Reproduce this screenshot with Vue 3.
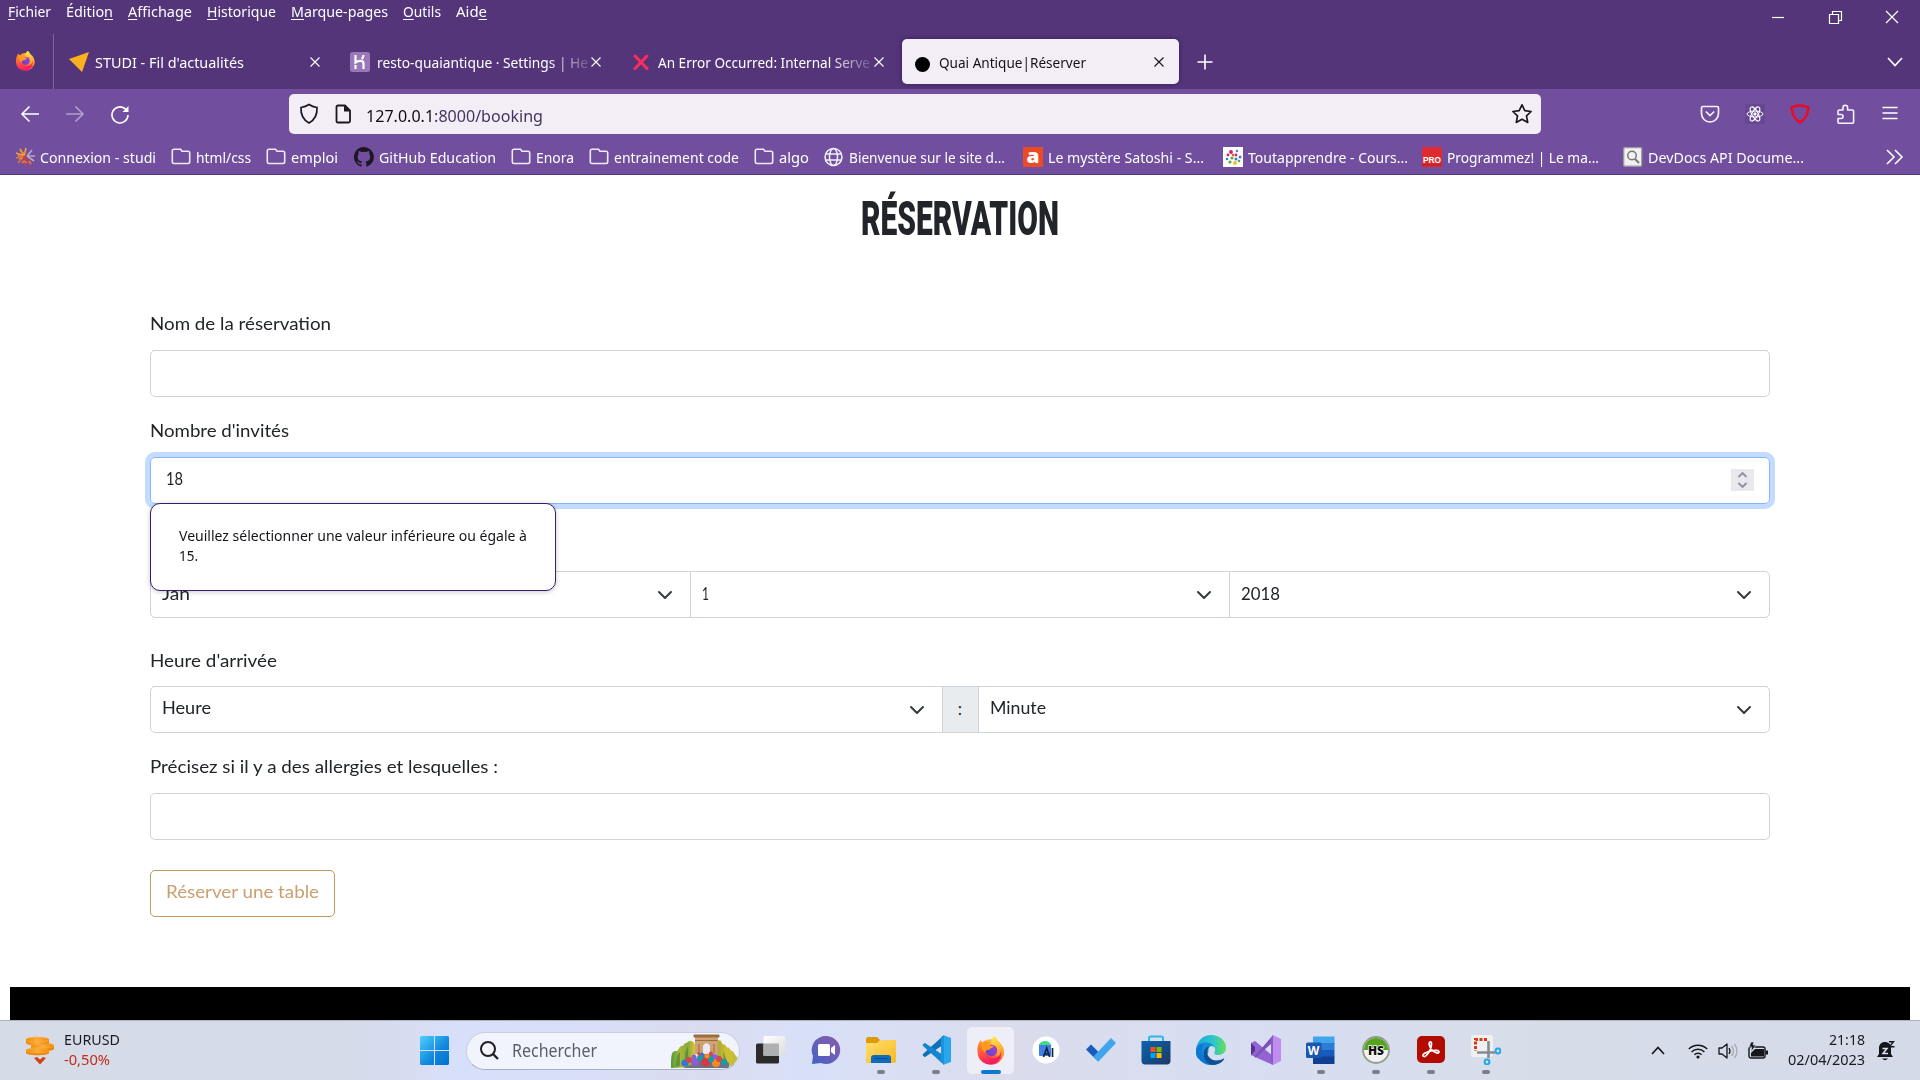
<script setup>
// Sets a text run to an exact width while keeping it in the flow.
const vFit = {
  mounted(el, { value }) {
    const natural = el.getBoundingClientRect().width
    el.style.transform = `scaleX(${value / natural})`
    el.style.marginRight = `${value - natural}px`
  },
}

const menus = [
  { pre: '', key: 'F', post: 'ichier', w: 43 },
  { pre: 'Éditio', key: 'n', post: '', w: 47 },
  { pre: '', key: 'A', post: 'ffichage', w: 64 },
  { pre: '', key: 'H', post: 'istorique', w: 69 },
  { pre: '', key: 'M', post: 'arque-pages', w: 97 },
  { pre: '', key: 'O', post: 'utils', w: 38 },
  { pre: 'Aid', key: 'e', post: '', w: 31 },
]

const firefox = `
  <circle cx="15" cy="17" r="12.8" fill="url(#ffBody)"/>
  <path d="M18 1c4 3 4 6 6 7 4 4 5 9 3 14l-9-3-3-10c0-4 1-6 3-8z" fill="url(#ffTop)"/>
  <path d="M1.500 17C1 11 3 7 5 5l1 3c2-1 4-1 6 0-1 2 0 3 4 4-2 2-4 2-5 4-1 4 2 7 6 7 5 0 8-3 8-8 2 8-4 14-11 14C7 29 2 25 1.500 17z" fill="url(#ffFace)"/>
  <circle cx="15.500" cy="15.500" r="5.700" fill="url(#ffGlobe)"/>
  <path d="M5 8c4-1 6 0 8 2 2 1 4 1 5 1-1 2-4 2-5 4-2-1-4 1-4 3-3-3-4-6-4-10z" fill="#ff9a1f"/>`

const folder = '<path d="M3 16.500h14c1 0 1.700-.7 1.700-1.700V6c0-1-.7-1.700-1.700-1.700h-6L9.500 2.200H3c-1 0-1.700.7-1.700 1.700v11c0 1 .7 1.600 1.700 1.600z" fill="none" stroke="#efe9f6" stroke-width="1.600"/>'

const bookmarks = [
  { label: 'Connexion - studi', w: 116, icon: '<g fill="none" stroke-width="1.700"><path d="M9 9 5 2M9 9 1 6M9 9l2-8" stroke="#f2a23c"/><path d="m9 9-8 2m8-2-6 7" stroke="#d9773c"/><path d="m9 9 1 10M9 9l7 9" stroke="#d23b3b"/><path d="m12 9 5-6m-5 6h8m-8 0 7 5" stroke="#b9a6c4"/></g><path d="m6 5 3 1 2-1M4 12l3-1m0 5 2-2 3 2m-9-8 2 2m9 4 2 3" stroke="#e9803c" fill="none" stroke-width="1.500"/>' },
  { label: 'html/css', w: 55, icon: folder },
  { label: 'emploi', w: 47, icon: folder },
  { label: 'GitHub Education', w: 117, icon: '<path d="M10 0a10 10 0 0 0-3.200 19.500c.5.1.7-.2.700-.5v-1.800c-2.800.6-3.400-1.300-3.400-1.300-.4-1.100-1.100-1.400-1.100-1.400-.9-.6.100-.6.100-.6 1 .1 1.500 1 1.500 1 .9 1.500 2.400 1.100 2.900.8.100-.6.300-1.100.6-1.300-2.200-.3-4.500-1.100-4.500-5 0-1.100.4-2 1-2.700-.1-.2-.4-1.200.1-2.600 0 0 .8-.3 2.700 1a9.500 9.500 0 0 1 5 0c1.900-1.300 2.700-1 2.700-1 .5 1.400.2 2.400.1 2.600.6.700 1 1.600 1 2.700 0 3.900-2.300 4.700-4.600 5 .4.300.7.900.7 1.800V19c0 .3.200.6.700.5A10 10 0 0 0 10 0z" fill="#1b1620"/>' },
  { label: 'Enora', w: 38, icon: folder },
  { label: 'entrainement code', w: 125, icon: folder },
  { label: 'algo', w: 30, icon: folder },
  { label: 'Bienvenue sur le site d...', w: 156, slot: 158.5, icon: '<g fill="none" stroke="#f4f0f8" stroke-width="1.500"><circle cx="9.500" cy="10" r="8.500"/><ellipse cx="9.500" cy="10" rx="4" ry="8.500"/><path d="M1.500 7h16M1.500 13h16"/></g>' },
  { label: 'Le mystère Satoshi - S...', w: 156, slot: 159.5, icon: '<path fill="#ea4b26" d="M0 0h20v20H0z"/><text x="3.500" y="15.500" font-family="Open Sans, sans-serif" font-weight="800" font-size="19" fill="#fff" textLength="13" lengthAdjust="spacingAndGlyphs">a</text>' },
  { label: 'Toutapprendre - Cours...', w: 160, slot: 159.5, icon: '<path fill="#fff" d="M0 0h20v20H0z"/><g fill="#d81e5b"><circle cx="8" cy="5" r="1.900"/><circle cx="5" cy="8" r="1.400"/><circle cx="13" cy="8" r="1.400"/></g><g fill="#3c7fc0"><circle cx="17" cy="10" r="1.500"/><circle cx="4" cy="12" r="1.300"/><circle cx="13" cy="12" r="1.500"/><circle cx="14" cy="4" r="1.200"/></g><g fill="#59a846"><circle cx="7" cy="15" r="1.600"/><circle cx="9" cy="11" r="1.600"/><circle cx="16" cy="14" r="1.300"/></g><circle cx="12" cy="16" r="2" fill="#f3c02c"/><circle cx="10" cy="8" r="1.300" fill="#e8582b"/>' },
  { label: 'Programmez! | Le ma...', w: 152, slot: 160.5, icon: '<path fill="#df2b2f" d="M0 0h20v20H0z"/><path d="M0 18h20" stroke="#b01c20"/><text x="1" y="15.500" font-family="Liberation Sans, sans-serif" font-weight="700" font-size="8.500" fill="#fff" textLength="18" lengthAdjust="spacingAndGlyphs">PRO</text>' },
  { label: 'DevDocs API Docume...', w: 156, slot: 160, icon: '<rect x=".7" y=".7" width="18" height="18.500" rx="1" fill="#f1f1f1" stroke="#9c9c98" stroke-width="1.300"/><circle cx="9" cy="8.500" r="4.300" fill="none" stroke="#777" stroke-width="1.500"/><path d="m12 12 4 4" stroke="#777" stroke-width="2.200"/>' },
]

const apps = [
  { name: 'vue', state: '', icon: '<rect y="8.500" width="23" height="20" rx="1.500" fill="#2b2b2a"/><rect x="7.500" y="1" width="22" height="20" rx="1.500" fill="url(#tv)"/><path d="M7.500 8.500H23V21H7.500z" fill="#aeb0b2"/>' },
  { name: 'chat', state: '', icon: '<path d="M15.500 1A14 14 0 1 1 10 28L1 29l1-8A14 14 0 0 1 15.500 1z" fill="url(#chat)"/><rect x="7" y="9" width="12" height="12" rx="1.500" fill="#fff"/><path d="m20 13 4-3v10l-4-3z" fill="#fff"/>' },
  { name: 'files', state: 'open', icon: '<path d="M0 4c0-1 1-2 2-2h9l3 3v8H0z" fill="#dd9a0a"/><path d="M0 8h11l3-3h16v21c0 1-1 2-2 2H0z" fill="url(#fold)"/><path d="M5 28v-5c0-2 1-3 3-3h14c2 0 3 1 3 3v5z" fill="#0f6cbd"/><path d="M8.500 23.500h13" stroke="#0b4a86"/>' },
  { name: 'code', state: 'open', icon: '<path d="m2 19 20-18v9L4 22c-1 0-3-2-2-3z" fill="#0a72b8"/><path d="m2 11 20 18v-9L4 8c-1 0-3 2-2 3z" fill="#1287cf"/><path d="m22 0 8 3v24l-8 3z" fill="#2aa6ee"/><path d="m21 1 2 0v28l-3-2V3z" fill="#1a93dd"/>' },
  { name: 'firefox', state: 'active', icon: firefox },
  { name: 'studio', state: '', icon: '<circle cx="15" cy="15" r="13.500" fill="#fff"/><rect x="8" y="9" width="12" height="12" rx="1" fill="#3f7fe8"/><path d="M8.500 10a5.500 4 0 0 1 11 0z" fill="#3ddc84"/><path d="m12.500 22 3.200-9 3 9m2.800-9v9m-8-3h4" stroke="#152238" stroke-width="1.700" fill="none"/>' },
  { name: 'todo', state: '', icon: '<path d="m0 14.500 5-5 8 8-3 7z" fill="#1a5cbe"/><path d="M7.500 21.500 25 3l5 5-18 19z" fill="#41a5ee"/>' },
  { name: 'store', state: '', icon: '<path d="M8 7V3c0-1 1-1.500 2-1.500h10c1 0 2 .5 2 1.500v4" fill="none" stroke="#29b8ee" stroke-width="2"/><path d="M.5 6h29v20c0 2-1.500 3.500-3.500 3.500H4c-2 0-3.500-1.500-3.500-3.500z" fill="url(#store)"/><path d="M9.500 12h5v5h-5z" fill="#f25022"/><path d="M15.500 12h5v5h-5z" fill="#7fba00"/><path d="M9.500 18h5v5h-5z" fill="#00a4ef"/><path d="M15.500 18h5v5h-5z" fill="#ffb900"/>' },
  { name: 'edge', state: '', icon: '<path d="M.2 14C1 6 7 0 15 0c9 0 15 6 15 12.500 0 5-3.500 7.500-8 7.500-3 0-4.500-1.500-3.500-3 1.500-2 .5-6-4-6C9 11 5 14 .2 14z" fill="url(#edgeTop)"/><path d="M0 16C0 10 5 7.500 9.500 7.500c4 0 7 1.500 8.500 3.500-5-1.500-6 3-5.500 6C4 30-1 22 0 16z" fill="#138bd8"/><path d="M0 15c1-4 4-6 8-6-3 3-3 10 1 14 5 5 12 5 19 1-3 4-8 6-13 6C6 30 0 23 0 15z" fill="#0c78d1"/><path d="M13.500 11.500C9 15 11 25 20 25.500c3 0 6-1 7.500-2 .5-.3 1 0 .7.600C25 29 20 30 17 30 8 29 6 19 9 14c1-1.500 3-2.500 4.500-2.500z" fill="#0c4f94"/>' },
  { name: 'vs', state: '', icon: '<path d="m0 8 4-2 18 15v9L4 22l-4-2z" fill="#9263d1"/><path d="M0 8v12l4-4v-4z" fill="#52348c"/><path d="m4 23 18-16V0L4 21z" fill="#7b50b5"/><path d="m22 0 8 4v22l-8 4z" fill="#c18cf0"/><path d="M20 2h2v26l-2-1z" fill="#8b5bc7"/>' },
  { name: 'word', state: 'open', icon: '<path d="M7 1.500h21.500V9H7z" fill="#41a5ee"/><path d="M7 8h21.500v7H7z" fill="#2b7cd3"/><path d="M7 15h21.500v7H7z" fill="#185abd"/><path d="M7 21.500h21.500V29H7z" fill="#103f91"/><rect y="7.500" width="15.500" height="15.500" rx="1.500" fill="#1b56b5"/><text x="1.800" y="19.500" font-family="Open Sans, sans-serif" font-weight="700" font-size="12" fill="#fff">W</text>' },
  { name: 'heidi', state: 'open', icon: '<circle cx="15" cy="15" r="13" fill="#f2f2f0" stroke="#919c8c" stroke-width="1.800"/><path d="M3 15a12 12 0 0 1 24 0z" fill="#55a51c"/><text x="7" y="20" font-family="Open Sans, sans-serif" font-weight="800" font-size="13" fill="#111" stroke="#fff" stroke-width="1.500" paint-order="stroke" textLength="16" lengthAdjust="spacingAndGlyphs">HS</text>' },
  { name: 'acrobat', state: 'open', icon: '<rect x="1" y="1" width="28" height="27" rx="5" fill="#b30b00"/><path d="M7 21c-1-1.500 3-4 8-5 4-1 8-1 8 1s-4 1-7-2c-2-2-4-7-2-8s2 4 0 8-5 8-7 6z" fill="none" stroke="#fff" stroke-width="1.700"/>' },
  { name: 'snip', state: 'open', icon: '<rect width="22" height="22" rx="3" fill="#f0f0f1"/><path d="M16 4.500H4.500V16" fill="none" stroke="#d83b14" stroke-width="3" stroke-dasharray="3 1.500"/><path d="M17.500 6v17M6 17.500h18" stroke="#858b94" stroke-width="2.600"/><circle cx="16" cy="27" r="2.400" fill="none" stroke="#22a5ea" stroke-width="2"/><circle cx="27" cy="16" r="2.400" fill="none" stroke="#22a5ea" stroke-width="2"/>' },
]

const dates = [
  { text: 'Jan', w: 28 },
  { text: '1', w: 7 },
  { text: '2018', w: 39 },
]
const balls = [
  [14, 29, 3.600, '#2f78d4'], [24, 28, 4, '#8b5fd0'], [34.500, 28, 4.600, '#d33a45'], [45, 29, 4, '#fa8a1c'], [53, 28, 3.200, '#1b9aa5'],
  [18, 26, 3, '#d8434c'], [29, 24, 3, '#159ca5'], [40, 25.500, 3, '#159ca5'], [48, 25, 3, '#d8434c'], [23, 23, 2.500, '#8b5fd0'], [36, 22, 2.500, '#fa8a1c'], [44, 22.500, 2.500, '#8b5fd0'], [31, 20.500, 2, '#2f78d4'], [40, 19.500, 2, '#d8434c'], [28, 20, 1.800, '#d8434c'],
]
</script>

<template>
  <div class="screen">
    <svg class="defs" width="0" height="0" aria-hidden="true">
      <defs>
        <linearGradient id="ffBody" x1=".8" y1="0" x2=".3" y2="1"><stop stop-color="#ffd63a" /><stop offset=".5" stop-color="#ff7a2a" /><stop offset="1" stop-color="#ec1561" /></linearGradient>
        <linearGradient id="ffTop" x1="0" y1="0" x2=".3" y2="1"><stop stop-color="#fff04a" /><stop offset="1" stop-color="#ff9a2e" /></linearGradient>
        <linearGradient id="ffFace" x1="0" y1="0" x2=".5" y2="1"><stop stop-color="#ffa01e" /><stop offset=".6" stop-color="#ff4a45" /><stop offset="1" stop-color="#f01a66" /></linearGradient>
        <linearGradient id="ffGlobe" x1="1" y1="0" x2="0" y2="1"><stop stop-color="#b13bd8" /><stop offset="1" stop-color="#5646c4" /></linearGradient>
        <linearGradient id="tv" x1="0" y1="0" x2="1" y2="1"><stop stop-color="#fff" /><stop offset="1" stop-color="#dcdcde" /></linearGradient>
        <linearGradient id="chat" x1="1" y1="0" x2="0" y2="1"><stop stop-color="#8a5aa8" /><stop offset=".5" stop-color="#6a60b8" /><stop offset="1" stop-color="#3f63c8" /></linearGradient>
        <linearGradient id="fold" x1="0" y1="0" x2="1" y2="1"><stop stop-color="#ffdf70" /><stop offset="1" stop-color="#fbb91f" /></linearGradient>
        <linearGradient id="store" x1="0" y1="0" x2="1" y2="1"><stop stop-color="#0a64b0" /><stop offset="1" stop-color="#1f3764" /></linearGradient>
        <linearGradient id="edgeTop"><stop stop-color="#1ba6dc" /><stop offset=".6" stop-color="#30c7c9" /><stop offset="1" stop-color="#66e04e" /></linearGradient>
        <linearGradient id="win" x1="0" y1="0" x2="1" y2="1"><stop stop-color="#4fd0fb" /><stop offset=".6" stop-color="#0f87dc" /><stop offset="1" stop-color="#0070cf" /></linearGradient>
        <linearGradient id="coin"><stop stop-color="#ef8a0c" /><stop offset=".5" stop-color="#fcab3e" /><stop offset="1" stop-color="#ef8a0c" /></linearGradient>
        <linearGradient id="trees"><stop stop-color="#4f9a3c" /><stop offset=".35" stop-color="#a9b83a" /><stop offset=".7" stop-color="#8aa83a" /><stop offset="1" stop-color="#d8c83a" /></linearGradient>
        <linearGradient id="treesRight"><stop stop-color="#a7aa30" /><stop offset=".5" stop-color="#d2c036" /><stop offset="1" stop-color="#b9b93a" /></linearGradient>
      </defs>
    </svg>

    <header class="titlebar">
      <div class="top">
        <nav class="menus">
          <span v-for="m in menus" :key="m.w" v-fit="m.w" class="txt">{{ m.pre }}<u>{{ m.key }}</u>{{ m.post }}</span>
        </nav>
        <svg class="controls" width="128" height="14" viewBox="0 0 128 14" fill="none" stroke="#fff" stroke-width="1.200">
          <path d="M0 7.500h12" /><path d="M57.500 4.500h9v9h-9zM60.500 4.500v-3h9v9h-3" /><path d="m114 1 12 12m0-12-12 12" />
        </svg>
      </div>
      <div class="tabs">
        <div class="pin"><svg width="21" height="21" viewBox="0 0 30 30" v-html="firefox"></svg></div>
        <div class="tab first">
          <svg width="20" height="20" viewBox="0 0 20 20"><path d="M0 7 20 0 13 20z" fill="#fcb020" /></svg>
          <div class="name"><span v-fit="149" class="txt">STUDI - Fil d'actualités</span></div>
          <svg class="x" width="10" height="10" viewBox="0 0 10 10"><path d="m.5.500 9 9m0-9-9 9" /></svg>
        </div>
        <div class="tab second">
          <svg width="20" height="20" viewBox="0 0 20 20"><rect width="20" height="20" rx="2.500" fill="#9a78b8" /><path d="M5.500 3v7.500c3-2 8-2.500 8 1V17m-8 0v-4M13.500 3c0 2-.7 3-1.800 4" stroke="#fff" stroke-width="2.200" fill="none" /></svg>
          <div class="name fade"><span v-fit="211" class="txt">resto-quaiantique · Settings | He</span></div>
          <svg class="x" width="10" height="10" viewBox="0 0 10 10"><path d="m.5.500 9 9m0-9-9 9" /></svg>
        </div>
        <div class="tab third">
          <svg width="17" height="17" viewBox="0 0 17 17"><path d="m2 3 12 12.500M14 3 2 15.500" stroke="#fb2d5c" stroke-width="3" stroke-linecap="round" /></svg>
          <div class="name fade"><span v-fit="212" class="txt">An Error Occurred: Internal Serve</span></div>
          <svg class="x" width="10" height="10" viewBox="0 0 10 10"><path d="m.5.500 9 9m0-9-9 9" /></svg>
        </div>
        <div class="tab active">
          <i class="disc"></i>
          <div class="name"><span v-fit="147" class="txt">Quai Antique|Réserver</span></div>
          <svg class="x" width="10" height="10" viewBox="0 0 10 10"><path d="m.5.500 9 9m0-9-9 9" /></svg>
        </div>
        <svg class="plus" width="16" height="16" viewBox="0 0 16 16"><path d="M8 .5v15M.5 8h15" stroke="#fff" stroke-width="1.600" /></svg>
        <svg class="more" width="16" height="10" viewBox="0 0 16 10"><path d="m1 1 7 7.500L15 1" fill="none" stroke="#fff" stroke-width="1.600" /></svg>
      </div>
    </header>

    <section class="toolbar">
      <div class="nav">
        <svg width="20" height="20" viewBox="0 0 20 20" class="arrow"><path d="M19 10H2m7.500-7.500L2 10l7.500 7.500" /></svg>
        <svg width="20" height="20" viewBox="0 0 20 20" class="arrow dim"><path d="M1 10h17m-7.500-7.500L18 10l-7.500 7.500" /></svg>
        <svg width="20" height="20" viewBox="0 0 20 20" class="arrow"><path d="M18 11A8 8 0 1 1 15 4.700L17.500 7" /><path d="M18.500 2v6h-6z" fill="#fff" stroke="none" /></svg>
      </div>
      <div class="url">
        <svg width="20" height="22" viewBox="0 0 20 22" fill="none" stroke="#1b1622" stroke-width="1.700"><path d="M10 1.500c3 2 5 2.500 8 3 .4 7-1.500 12-8 15.500C3.500 16.500 1.600 11.500 2 4.500c3-.5 5-1 8-3z" /></svg>
        <svg class="doc" width="16" height="20" viewBox="0 0 16 20"><path d="M3 1.500h7l5 5V17c0 1-.7 1.500-1.500 1.500H3c-1 0-1.500-.6-1.500-1.500V3c0-1 .6-1.500 1.500-1.500z" fill="none" stroke="#1b1622" stroke-width="1.800" /><path d="M9 1.500 15 7.500H9z" fill="#1b1622" /></svg>
        <span v-fit="177" class="address"><b>127.0.0.1</b>:8000/booking</span>
        <svg class="star" width="22" height="22" viewBox="0 0 22 22"><path d="m11 1.800 2.800 5.900 6.300.8-4.600 4.400 1.200 6.500-5.700-3.200-5.700 3.200 1.200-6.500L1.900 8.500l6.300-.8z" fill="none" stroke="#1b1622" stroke-width="1.700" stroke-linejoin="round" /></svg>
      </div>
      <div class="tools">
        <svg width="20" height="20" viewBox="0 0 20 20" fill="none" stroke="#f6f1fa" stroke-width="1.700"><path d="M3 2.500h14c1 0 1.500.6 1.500 1.500v5.500a8.500 8.500 0 0 1-17 0V4c0-1 .6-1.500 1.500-1.500z" /><path d="m5.800 7.500 4.200 4 4.200-4" /></svg>
        <svg width="20" height="20" viewBox="0 0 20 20" fill="none" stroke="#fff" stroke-width="1"><path fill="#654792" stroke="none" d="M0 0h20v20H0z" /><ellipse cx="10" cy="10" rx="8" ry="3" /><ellipse cx="10" cy="10" rx="8" ry="3" transform="rotate(60 10 10)" /><ellipse cx="10" cy="10" rx="8" ry="3" transform="rotate(120 10 10)" /><circle cx="10" cy="10" r="1.200" fill="#fff" /></svg>
        <svg width="20" height="20" viewBox="0 0 20 20" fill="none" stroke="#ea0a2a" stroke-width="2.600"><path d="M10 1.500c3 0 5.500.7 8.500 2-.5 6-3 11.500-8.500 15-5.500-3.500-8-9-8.500-15 3-1.300 5.500-2 8.500-2z" /></svg>
        <svg width="20" height="20" viewBox="0 0 20 20" fill="none" stroke="#f6f1fa" stroke-width="1.600" stroke-linejoin="round"><path d="M8 6V3.500a2.300 2.300 0 0 1 4.600 0V6h4.600c.8 0 1.400.5 1.400 1.300V18c0 .8-.6 1.300-1.400 1.300H4.400c-.8 0-1.400-.5-1.400-1.300v-3.500h3a2 2 0 0 0 0-4H3v-3C3 6.500 3.600 6 4.400 6z" /></svg>
        <svg width="20" height="20" viewBox="0 0 20 20" stroke="#fff" stroke-width="1.500"><path d="M2.500 3.500h15M2.500 9h15M2.500 14.500h15" /></svg>
      </div>
    </section>

    <nav class="bookmarks">
      <div v-for="b in bookmarks" :key="b.label" class="mark">
        <svg width="20" height="20" viewBox="0 0 20 20" v-html="b.icon"></svg>
        <div :style="{ width: (b.slot || b.w) + 'px' }"><span v-fit="b.w" class="txt">{{ b.label }}</span></div>
      </div>
      <svg class="chevs" width="18" height="16" viewBox="0 0 18 16"><path d="m1 1 7 7-7 7M9 1l7 7-7 7" fill="none" stroke="#fff" stroke-width="1.600" /></svg>
    </nav>

    <main class="page">
      <h1><span v-fit="198" class="txt">RÉSERVATION</span></h1>
      <form class="form" @submit.prevent>
        <label><span v-fit="181" class="txt">Nom de la réservation</span></label>
        <div class="box"></div>

        <label class="next"><span v-fit="139" class="txt">Nombre d'invités</span></label>
        <div class="box focus">
          <span v-fit="17" class="txt">18</span>
          <svg class="spin" width="23" height="22" viewBox="0 0 23 22"><path d="M0 0h23v22H0z" fill="#e9e9ed" /><path d="m7.500 8 4-4 4 4M7.500 14l4 4 4-4" fill="none" stroke="#8f8f9a" stroke-width="1.800" /></svg>
          <div class="bubble">
            <p><span v-fit="348" class="txt">Veuillez sélectionner une valeur inférieure ou égale à</span></p>
            <p><span v-fit="19" class="txt">15.</span></p>
          </div>
        </div>

        <div class="group dates">
          <div v-for="d in dates" :key="d.text" class="cell">
            <span v-fit="d.w" class="txt">{{ d.text }}</span>
            <svg width="16" height="10" viewBox="0 0 16 10"><path d="m2 2 6 6 6-6" /></svg>
          </div>
        </div>

        <label class="hour"><span v-fit="127" class="txt">Heure d'arrivée</span></label>
        <div class="group times">
          <div class="cell"><span v-fit="49" class="txt">Heure</span><svg width="16" height="10" viewBox="0 0 16 10"><path d="m2 2 6 6 6-6" /></svg></div>
          <div class="colon">:</div>
          <div class="cell"><span v-fit="56" class="txt">Minute</span><svg width="16" height="10" viewBox="0 0 16 10"><path d="m2 2 6 6 6-6" /></svg></div>
        </div>

        <label class="next"><span v-fit="348" class="txt">Précisez si il y a des allergies et lesquelles :</span></label>
        <div class="box"></div>
        <button type="submit"><span v-fit="153" class="txt">Réserver une table</span></button>
      </form>
      <footer></footer>
    </main>

    <section class="taskbar">
      <div class="widget">
        <svg width="28" height="30" viewBox="0 0 28 30">
          <g fill="#ef870a"><path d="M0 14h23v3c0 3-23 3-23 0zM5 9h23v4c0 3-23 3-23 0zM0 3h23v4c0 3-23 3-23 0z" /></g>
          <g fill="url(#coin)" stroke="#ffb13d" stroke-width=".6"><ellipse cx="11.500" cy="14.500" rx="11.500" ry="2.500" /><ellipse cx="16.500" cy="9.500" rx="11.500" ry="2.500" /><path d="M0 4v3c0 3 23 3 23 0V4z" stroke="none" /><ellipse cx="11.500" cy="3.500" rx="11.500" ry="2.500" /></g>
          <path d="m8 22 3-1 3 2.500 3-2.500 3 1-6 6.500z" fill="#cf4412" />
        </svg>
        <div class="rate"><div><span v-fit="56" class="txt">EURUSD</span></div><div class="down"><span v-fit="46" class="txt">-0,50%</span></div></div>
      </div>
      <svg class="start" width="29" height="29" viewBox="0 0 29 29"><path d="M1 0h13v14H0V1zM15 0h13l1 1v13H15zM0 15h14v14H1l-1-1zM15 15h14v13l-1 1H15z" fill="url(#win)" /></svg>
      <div class="search">
        <svg width="19" height="19" viewBox="0 0 19 19"><circle cx="8" cy="8" r="7" fill="none" stroke="#202024" stroke-width="2" /><path d="m13 13 5 5" stroke="#202024" stroke-width="2.400" /></svg>
        <span v-fit="85" class="txt">Rechercher</span>
        <svg class="arch" width="68" height="34" viewBox="0 0 68 34">
          <path d="M0 34c0-7 0-14 2-16 2-2 4 0 5-2s2-4 4-4 2-3 4-3 3-3 5-2 3 0 4 4v22z" fill="url(#trees)" />
          <path d="M46 8c2-3 4-2 5 1s3 0 4 3 3 0 4 3 3 1 4 4 5 5 5 8-4 5-10 5H46z" fill="url(#treesRight)" />
          <path d="M5 33c0-8 1-13 4-15v14zM14 30c0-9 0-14 3-17v15zM52 17l5 13h-4z" fill="#47823a" opacity=".65" />
          <path d="M22 30 30 20h12l16 9v5H12z" fill="#6c7186" />
          <path d="M24 2h23v18H24z" fill="#cfa274" /><path d="M32 20v-8q3.500-6 7 0v8z" fill="#e9eaf3" /><path d="M23 1h25v2H23zM24 6.500h23" fill="#a06f42" stroke="#9a6c41" /><path d="M28 10v9m15-9v9" stroke="#ab7d50" stroke-width="1.500" />
          <circle v-for="(b, i) in balls" :key="i" :cx="b[0]" :cy="b[1]" :r="b[2]" :fill="b[3]" />
        </svg>
      </div>
      <div class="apps">
        <div v-for="a in apps" :key="a.name" class="app" :class="a.state">
          <svg width="30" height="30" viewBox="0 0 30 30" v-html="a.icon"></svg>
          <i></i>
        </div>
      </div>
      <div class="tray">
        <svg width="14" height="9" viewBox="0 0 14 9"><path d="m1 8 6-6.500L13 8" fill="none" stroke="#15161a" stroke-width="1.700" /></svg>
        <svg class="wifi" width="20" height="16" viewBox="0 0 20 16" fill="none" stroke="#15161a" stroke-width="1.500"><path d="M.8 6a13 13 0 0 1 18.400 0M3.600 9a9 9 0 0 1 12.800 0M6.400 11.800a5 5 0 0 1 7.200 0" /><circle cx="10" cy="14" r="1.600" fill="#15161a" stroke="none" /></svg>
        <svg class="vol" width="20" height="16" viewBox="0 0 20 16" fill="none" stroke="#15161a" stroke-width="1.300"><path d="M1 5h3l5-4v14l-5-4H1z" stroke-linejoin="round" /><path d="M11 5q2 3 0 6" /><path d="M13.500 3q4 5 0 10M16.500 1q5 7 0 14" stroke="#a5a9b3" /></svg>
        <svg class="bat" width="20" height="17" viewBox="0 0 20 17"><rect x="1" y="5" width="16" height="11" rx="2" fill="none" stroke="#15161a" stroke-width="1.400" /><path d="M7 7h9v7.500H3V11zM17.500 8.500H20v4h-2.500z" fill="#15161a" /><path d="M3 0h3L5 3h3l-5 7 .7-5H1z" fill="#15161a" stroke="#d8ddea" stroke-width=".7" /></svg>
        <div class="clock"><div><span v-fit="36" class="txt">21:18</span></div><div><span v-fit="77" class="txt">02/04/2023</span></div></div>
        <svg class="bell" width="18" height="20" viewBox="0 0 18 20"><path d="M2 13V7c0-8 12-8 12 0v6l2 3H0zM5 17.500h6q-3 3.500-6 0z" fill="#15161a" /><path d="M5.500 7.500H10l-4 5h5" fill="none" stroke="#dfe3ee" stroke-width="1.500" /><path d="M12 .8h4.500l-4 5h5" fill="none" stroke="#15161a" stroke-width="1.400" /></svg>
      </div>
    </section>
  </div>
</template>

<style>
body { margin: 0; overflow: hidden; }
</style>

<style scoped>
.screen { width: 1920px; height: 1080px; display: flex; flex-direction: column; background: #fff; overflow: hidden; font: 15px/20px "Noto Sans", "Open Sans", sans-serif; color: #fff; }
.screen * { box-sizing: border-box; }
.defs { position: absolute; }
svg { flex: none; display: block; }
.txt { display: inline-block; flex: none; white-space: nowrap; transform-origin: 0 50%; }

.titlebar { height: 89px; background: #55357a; }
.top { height: 34px; display: flex; justify-content: space-between; align-items: flex-start; padding: 1px 20px 0 8px; }
.menus { display: flex; gap: 15px; }
.menus u { text-underline-offset: 2px; }
.controls { margin-top: 9px; }
.tabs { height: 55px; display: flex; align-items: center; }
.pin { width: 54px; height: 55px; border-right: 1px solid #7d659a; padding: 16px 0 0 15px; }
.tab { height: 45px; display: flex; align-items: center; }
.name { flex: 1; white-space: nowrap; display: flex; }
.fade { -webkit-mask-image: linear-gradient(90deg, #000 calc(100% - 42px), rgba(0, 0, 0, .15)); mask-image: linear-gradient(90deg, #000 calc(100% - 42px), rgba(0, 0, 0, .15)); }
.x { stroke: currentColor; stroke-width: 1.1; }
.first { width: 251px; margin-left: 15px; gap: 6px; }
.second { width: 251px; margin-left: 30px; gap: 7px; }
.second .x, .third .x { margin-left: -5px; }
.third { width: 251px; margin-left: 32px; gap: 8px; }
.active.tab { width: 277px; margin-left: 18px; padding: 0 15px 0 13px; gap: 9px; background: #f3eef5; color: #15111c; border-radius: 5px; box-shadow: 0 0 5px rgba(25, 5, 50, .5); }
.disc { width: 15px; height: 15px; border-radius: 50%; background: #000; margin-top: 5px; }
.plus { margin-left: 18px; }
.more { margin-left: auto; margin-right: 17px; }

.toolbar { height: 50px; background: #714f9e; display: flex; align-items: center; padding: 0 20px 0; }
.nav { width: 269px; display: flex; gap: 25px; }
.arrow { fill: none; stroke: #fff; stroke-width: 1.6; }
.dim { opacity: .45; }
.url { width: 1252px; height: 40px; border-radius: 5px; background: #f3eef5; display: flex; align-items: center; padding: 0 8px 0 10px; color: #46335f; }
.doc { margin: 0 15px 0 16px; }
.address { font-size: 17px; display: inline-block; white-space: nowrap; flex: none; transform-origin: 0 50%; padding-top: 3px; }
.address b { font-weight: 400; color: #0f0b16; }
.star { margin-left: auto; }
.tools { margin-left: 159px; display: flex; gap: 25px; }

.bookmarks { height: 36px; background: #714f9e; border-bottom: 1px solid #55357a; display: flex; align-items: center; gap: 15.200px; padding: 0 16px 0 15px; }
.mark { display: flex; align-items: center; gap: 5px; }
.mark svg { overflow: visible; }
.chevs { margin-left: auto; }

.page { height: 845px; display: flex; flex-direction: column; color: #212529; font: 17px/24px Lato, "Open Sans", sans-serif; }
.page h1 { margin: 19px auto 0; height: 50px; font: 900 49px/50px Roboto, "Liberation Sans", sans-serif; }
.form { margin: 68px 150px 0; display: flex; flex-direction: column; height: 605px; }
label { display: block; height: 24px; margin-bottom: 14px; }
.next { margin-top: 22px; }
.box { height: 47px; flex: none; border: 1px solid #ced4da; border-radius: 5px; position: relative; display: flex; align-items: center; justify-content: space-between; padding: 0 15px 0 15px; }
.focus { border-color: #86b7fe; box-shadow: 0 0 0 5px #c2dbfe; }
.focus > .txt { padding-bottom: 3px; }
.spin { margin-bottom: 1px; }
.bubble { position: absolute; z-index: 2; left: -1px; top: 45px; width: 406px; height: 88px; padding: 21px 28px; background: #fff; border: 1px solid #3b1c6b; border-radius: 10px; box-shadow: 0 1px 5px rgba(0, 0, 0, .22); font: 15px/20px "Noto Sans", "Open Sans", sans-serif; color: #15141a; }
.bubble p { margin: 0; height: 20px; display: flex; }
.group { height: 47px; flex: none; display: flex; border: 1px solid #ced4da; border-radius: 5px; }
.dates { margin-top: 67px; }
.cell { flex: 1; display: flex; align-items: center; justify-content: space-between; padding: 0 17px 0 11px; }
.cell svg { fill: none; stroke: #343a40; stroke-width: 2; stroke-linecap: round; stroke-linejoin: round; }
.cell .txt { padding-bottom: 3px; }
.dates .cell .txt { padding-bottom: 1px; }
.dates .cell + .cell { border-left: 1px solid #ced4da; }
.hour { margin: 31px 0 13px; }
.colon { width: 37px; background: #e9ecef; border: solid #ced4da; border-width: 0 1px; text-align: center; line-height: 44px; }
button { margin-top: 30px; width: 185px; height: 47px; flex: none; border: 1px solid #c69963; border-radius: 5px; background: #fff; color: #c9a06f; font: inherit; padding: 0 0 4px 15px; text-align: left; }
footer { margin: 70px 10px 0; height: 33px; background: #000; }

.taskbar { height: 60px; border-top: 1px solid #aeb2ba; display: flex; align-items: center; background: linear-gradient(90deg, #d5dce8 0, #d5dbe8 18%, #d8dffa 24%, #d7def5 32%, #dadcf0 36%, #d8e0f8 42%, #dadcec 53%, #d7def2 65%, #d7dde9 78%, #d5dae8 100%); color: #1a1b20; }
.widget { width: 394px; display: flex; gap: 10px; padding-left: 26px; align-items: center; }
.rate { height: 40px; margin-top: -4px; }
.rate > div { height: 20px; display: flex; }
.down { color: #c42b1c; }
.start { margin-left: 26px; }
.search { margin-left: 17px; width: 274px; height: 38px; border-radius: 19px; background: #f1f4fd; border: 1px solid #c9cee2; border-bottom-color: #aab0c4; display: flex; align-items: center; gap: 13px; padding-left: 13px; font-size: 17.500px; color: #5c5e66; overflow: hidden; }
.search .txt { margin-top: -1px; }
.arch { margin-left: auto; margin-top: 1px; }
.apps { display: flex; margin-left: 3px; }
.app { width: 55px; height: 59px; display: flex; flex-direction: column; align-items: center; padding-top: 14px; }
.app i { height: 4px; margin-top: 5px; border-radius: 2px; }
.app.open i { width: 8px; background: #7d7f88; }
.app.active { width: 49px; height: 49px; margin: 5px 3px; padding-top: 8px; background: #edeef8; border: 1px solid #dcdde8; border-radius: 6px; }
.app.active i { width: 20px; background: #0a78d4; }
.tray { display: flex; align-items: center; margin-left: auto; margin-right: 25px; }
.wifi { margin-left: 23px; }
.vol { margin-left: 10px; }
.bat { margin-left: 10px; }
.clock { width: 97px; margin: -4px 1px 0 0; }
.clock > div { height: 20px; display: flex; justify-content: flex-end; }
.bell { margin-left: 11px; }
</style>
